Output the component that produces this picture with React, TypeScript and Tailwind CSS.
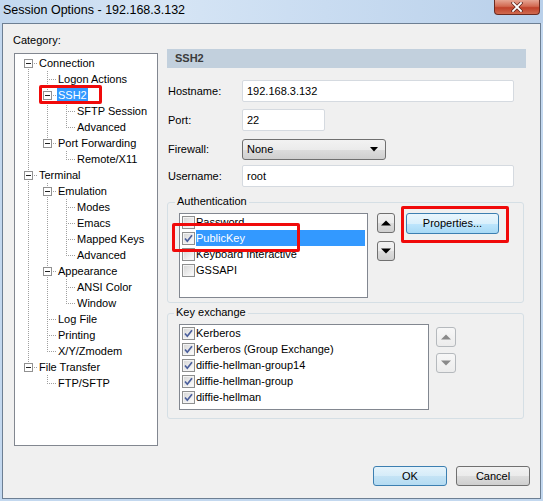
import React from 'react'

type Node = [number, string]

const TREE: Node[] = [
  [0, 'Connection'],
  [1, 'Logon Actions'],
  [1, 'SSH2'],
  [2, 'SFTP Session'],
  [2, 'Advanced'],
  [1, 'Port Forwarding'],
  [2, 'Remote/X11'],
  [0, 'Terminal'],
  [1, 'Emulation'],
  [2, 'Modes'],
  [2, 'Emacs'],
  [2, 'Mapped Keys'],
  [2, 'Advanced'],
  [1, 'Appearance'],
  [2, 'ANSI Color'],
  [2, 'Window'],
  [1, 'Log File'],
  [1, 'Printing'],
  [1, 'X/Y/Zmodem'],
  [0, 'File Transfer'],
  [1, 'FTP/SFTP'],
]

// does the item at i have a later sibling at the same depth?
function hasNext(i: number) {
  const d = TREE[i][0]
  for (let j = i + 1; j < TREE.length; j++) {
    if (TREE[j][0] < d) return false
    if (TREE[j][0] === d) return true
  }
  return false
}

function ancestorIndex(i: number, level: number) {
  for (let j = i - 1; j >= 0; j--) {
    if (TREE[j][0] === level) return j
  }
  return -1
}

const DOT = { stroke: '#a0a0a0', strokeDasharray: '1 1' }

function TreeCell({ through, up, down, across, box }: { through?: boolean; up?: boolean; down?: boolean; across?: boolean; box?: boolean }) {
  return (
    <svg width="19" height="16" className="block shrink-0">
      {through && <line x1="9.5" y1="0" x2="9.5" y2="16" {...DOT} />}
      {up && <line x1="9.5" y1="0" x2="9.5" y2="8" {...DOT} />}
      {down && <line x1="9.5" y1="8" x2="9.5" y2="16" {...DOT} />}
      {across && <line x1="9" y1="8.5" x2="19" y2="8.5" {...DOT} />}
      {box && (
        <g>
          <rect x="5.5" y="4.5" width="8" height="8" fill="#ffffff" stroke="#919191" />
          <line x1="7" y1="8.5" x2="12" y2="8.5" stroke="#222222" />
        </g>
      )}
    </svg>
  )
}

function Tree() {
  return (
    <div className="w-[144px] h-[393px] border border-[#828790] bg-white pt-[1px] pl-[4px]">
      {TREE.map(([depth, label], i) => {
        const cells = []
        for (let a = 0; a < depth; a++) {
          const anc = ancestorIndex(i, a)
          cells.push(<TreeCell key={a} through={anc >= 0 && hasNext(anc)} />)
        }
        const expandable = i + 1 < TREE.length && TREE[i + 1][0] > depth
        cells.push(<TreeCell key="own" up={i !== 0} down={hasNext(i)} across box={expandable} />)
        const selected = label === 'SSH2'
        return (
          <div key={i} className="flex h-[16px] items-center whitespace-nowrap">
            {cells}
            <span className={selected ? 'px-[1px] leading-[14px] bg-[#3399ff] text-white' : 'px-[1px] leading-[14px]'}>{label}</span>
          </div>
        )
      })}
    </div>
  )
}

function CheckBox({ checked }: { checked?: boolean }) {
  return (
    <svg width="13" height="13" className="block shrink-0">
      <defs>
        <linearGradient id="cbfill" x1="0" y1="0" x2="1" y2="1">
          <stop offset="0" stopColor="#d8d8d8" />
          <stop offset="1" stopColor="#fbfbfb" />
        </linearGradient>
      </defs>
      <rect x="0.5" y="0.5" width="12" height="12" fill="#f4f4f4" stroke="#8e8f8f" />
      <rect x="2" y="2" width="9" height="9" fill="url(#cbfill)" />
      {checked && <path d="M3 6.5 L5.3 9.2 L10 3.2" fill="none" stroke="#4b5f9c" strokeWidth="1.7" />}
    </svg>
  )
}

function ListRow({ label, checked, selected }: { label: string; checked?: boolean; selected?: boolean }) {
  return (
    <div className="flex h-[16px] items-center pl-[2px] pr-[2px] whitespace-nowrap">
      <CheckBox checked={checked} />
      <span className={selected ? 'ml-[1px] flex-1 h-[16px] leading-[16px] bg-[#3399ff] text-white' : 'ml-[1px] leading-[16px]'}>{label}</span>
    </div>
  )
}

function ArrowButton({ dir, disabled, w }: { dir: 'up' | 'down'; disabled?: boolean; w: string }) {
  const fill = disabled ? '#8a8a8a' : '#000000'
  return (
    <div
      className={
        disabled
          ? `${w} h-[20px] rounded-[3px] border border-[#b5b9bd] bg-[linear-gradient(#f7f7f7,#ececec)] flex items-center justify-center`
          : `${w} h-[20px] rounded-[3px] border border-[#707070] bg-[linear-gradient(#f2f2f2,#ebebeb_50%,#dddddd_51%,#cfcfcf)] flex items-center justify-center`
      }
    >
      <svg width="10" height="6" className="block">
        {dir === 'up' ? <polygon points="0,5.5 5,0.5 10,5.5" fill={fill} /> : <polygon points="0,0.5 10,0.5 5,5.5" fill={fill} />}
      </svg>
    </div>
  )
}

function TextBox({ value, w }: { value: string; w: string }) {
  return <div className={`${w} h-[22px] border border-[#d5dae0] rounded-[2px] bg-white pl-[4px] flex items-center`}>{value}</div>
}

function FormRow({ label, children, gap }: { label: string; children: React.ReactNode; gap: string }) {
  return (
    <div className={`flex h-[22px] items-center ${gap}`}>
      <div className="w-[75px] pl-[1px]">{label}</div>
      {children}
    </div>
  )
}

export default function App() {
  return (
    <div className="relative w-[543px] h-[501px] overflow-hidden bg-[#c3d8ef] font-['Liberation_Sans',Arial,sans-serif] text-[11px] text-black">
      {/* title bar */}
      <div className="h-[23px] flex items-start justify-between pl-[3px] pr-[3px] bg-[linear-gradient(90deg,#c3d8ef_0%,#d6e5f5_30%,#c9dcf1_60%,#b9d0ea_100%)]">
        <div className="pt-[3px] text-[12.5px] leading-[15px] text-black">Session Options - 192.168.3.132</div>
        <div className="w-[46px] h-[15px] rounded-b-[4px] border border-t-0 border-[#6b2b20] bg-[linear-gradient(#e6a593,#d26a52_45%,#c0412a_55%,#cf6a4f)] flex items-center justify-center">
          <svg width="12" height="10" className="block">
            <path d="M2 1 L10 9 M10 1 L2 9" stroke="#5a2219" strokeWidth="3.2" strokeLinecap="square" />
            <path d="M2 1 L10 9 M10 1 L2 9" stroke="#ffffff" strokeWidth="1.8" strokeLinecap="square" />
          </svg>
        </div>
      </div>

      {/* client area */}
      <div className="ml-[2px] w-[539px] h-[476px] border border-[#6d7f93] bg-[#f0f0f0] flex flex-col">
        <div className="flex">
          <div className="pl-[10px]">
            <div className="pt-[9px] leading-[14px]">Category:</div>
            <div className="mt-[6px] ml-[1px]">
              <Tree />
            </div>
          </div>

          <div className="ml-[9px] pt-[25px] w-[359px]">
            <div className="h-[19px] bg-[#c2d0dd] pl-[8px] flex items-center font-bold text-[#3b3b3b]">SSH2</div>

            <FormRow label="Hostname:" gap="mt-[12px]">
              <TextBox value="192.168.3.132" w="w-[272px]" />
            </FormRow>
            <FormRow label="Port:" gap="mt-[7px]">
              <TextBox value="22" w="w-[83px]" />
            </FormRow>
            <FormRow label="Firewall:" gap="mt-[7px]">
              <div className="w-[144px] h-[21px] rounded-[3px] border border-[#707070] bg-[linear-gradient(#f2f2f2,#ebebeb_50%,#dddddd_51%,#cfcfcf)] pl-[4px] pr-[7px] flex items-center justify-between">
                <span>None</span>
                <svg width="8" height="5" className="block">
                  <polygon points="0,0 8,0 4,4.5" fill="#000000" />
                </svg>
              </div>
            </FormRow>
            <FormRow label="Username:" gap="mt-[5px]">
              <TextBox value="root" w="w-[272px]" />
            </FormRow>

            {/* Authentication */}
            <div className="relative mt-[15px] w-[357px] h-[101px] rounded-[3px] border border-[#d5dfe5] pl-[11px] pt-[10px] flex items-start">
              <div className="absolute left-[7px] top-[-9px] px-[2px] bg-[#f0f0f0] leading-[14px]">Authentication</div>
              <div className="w-[189px] h-[85px] border border-[#828790] bg-white">
                <ListRow label="Password" />
                <ListRow label="PublicKey" checked selected />
                <ListRow label="Keyboard Interactive" />
                <ListRow label="GSSAPI" />
              </div>
              <div className="ml-[9px] flex flex-col gap-[8px]">
                <ArrowButton dir="up" w="w-[18px]" />
                <ArrowButton dir="down" w="w-[18px]" />
              </div>
              <div className="ml-[11px] w-[93px] h-[21px] rounded-[3px] border border-[#3c7fb1] bg-[linear-gradient(#eaf6fd,#d9f0fc_50%,#bee6fd_51%,#a7d9f5)] flex items-center justify-center">
                Properties...
              </div>
            </div>

            {/* Key exchange */}
            <div className="relative mt-[10px] w-[357px] h-[106px] rounded-[3px] border border-[#d5dfe5] pl-[11px] pt-[10px] flex items-start">
              <div className="absolute left-[6px] top-[-9px] px-[2px] bg-[#f0f0f0] leading-[14px]">Key exchange</div>
              <div className="w-[250px] h-[86px] border border-[#828790] bg-white">
                <ListRow label="Kerberos" checked />
                <ListRow label="Kerberos (Group Exchange)" checked />
                <ListRow label="diffie-hellman-group14" checked />
                <ListRow label="diffie-hellman-group" checked />
                <ListRow label="diffie-hellman" checked />
              </div>
              <div className="ml-[7px] mt-[3px] flex flex-col gap-[6px]">
                <ArrowButton dir="up" disabled w="w-[20px]" />
                <ArrowButton dir="down" disabled w="w-[20px]" />
              </div>
            </div>
          </div>
        </div>

        {/* dialog buttons */}
        <div className="mt-[20px] pr-[10px] flex justify-end gap-[9px]">
          <div className="w-[74px] h-[20px] rounded-[3px] border border-[#3c7fb1] bg-[linear-gradient(#e5f3fb,#d5ecf9_50%,#c4e3f5_51%,#b4dbf2)] flex items-center justify-center">OK</div>
          <div className="w-[74px] h-[20px] rounded-[3px] border border-[#707070] bg-[linear-gradient(#f2f2f2,#ebebeb_50%,#dddddd_51%,#cfcfcf)] flex items-center justify-center">Cancel</div>
        </div>
      </div>

      {/* red annotation boxes */}
      <div className="absolute left-[39px] top-[85px] w-[63px] h-[19px] border-[3px] border-[#f00a0a] rounded-[2px]" />
      <div className="absolute left-[172px] top-[223px] w-[128px] h-[29px] border-[3px] border-[#f00a0a] rounded-[2px]" />
      <div className="absolute left-[401px] top-[206px] w-[108px] h-[37px] border-[3px] border-[#f00a0a] rounded-[2px]" />
    </div>
  )
}
